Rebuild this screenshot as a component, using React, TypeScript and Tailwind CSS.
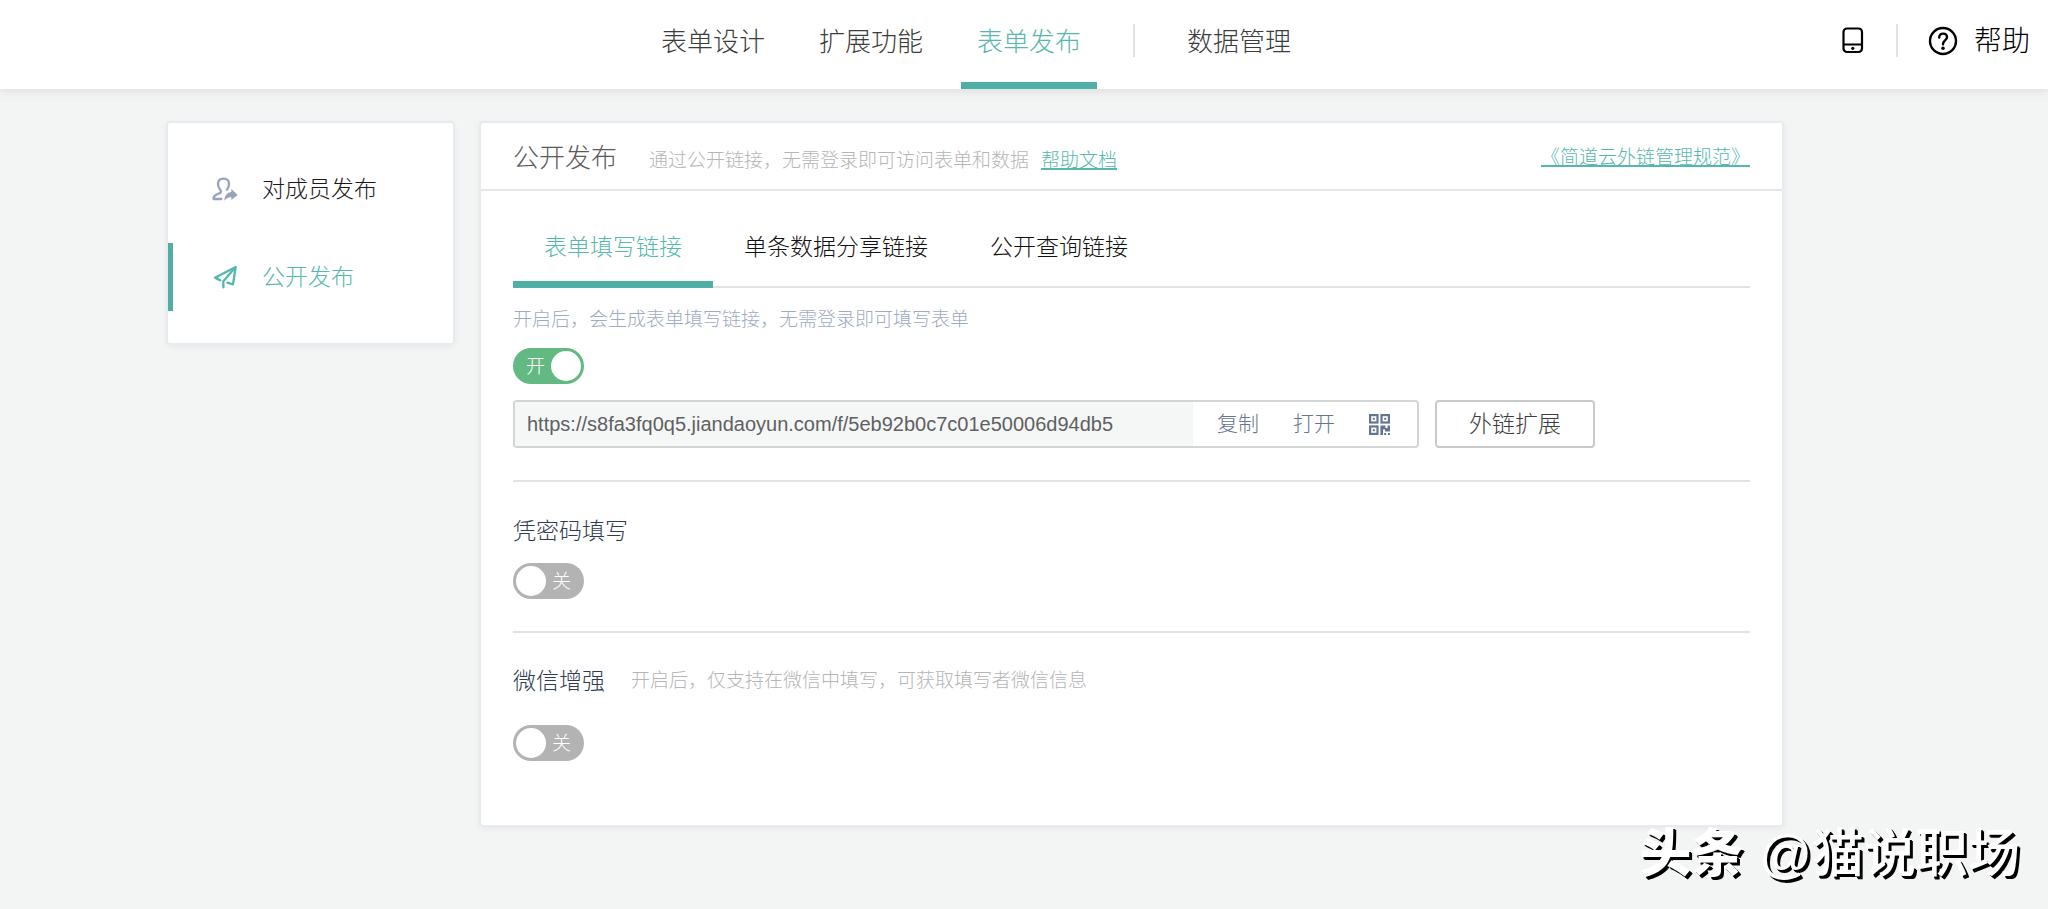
import { useId, useState } from "react";
import type { ReactNode } from "react";

function MemberShareIcon() {
  return (
    <svg viewBox="0 0 76 72" className="h-6 w-[26px]" aria-hidden="true">
      <path
        d="M27 66H4C2 58 8 54 16 51C26 48 28 45 24 39C19 33 17 27 17 21C17 11 23 5 33 5C44 5 50 11 50 21C50 28 47 34 44 38"
        fill="none"
        stroke="currentColor"
        strokeWidth="7"
        strokeLinecap="round"
        strokeLinejoin="round"
      />
      <path d="M36 71C37 55 45 46 57 45V36L76 54L57 69V60C49 60 43 64 36 71Z" fill="currentColor" />
    </svg>
  );
}

function PlaneIcon() {
  return (
    <svg viewBox="0 0 76 72" className="h-6 w-[26px]" aria-hidden="true">
      <g fill="none" stroke="currentColor" strokeWidth="7" strokeLinecap="round" strokeLinejoin="round">
        <path d="M24 46L8 38L70 6L62 58L45 53" />
        <path d="M68 8L33 49V67" />
      </g>
    </svg>
  );
}

function PhoneIcon() {
  return (
    <svg viewBox="0 0 22 27" className="h-[27px] w-[22px]" aria-hidden="true">
      <rect x="1.5" y="1.5" width="18.5" height="23.5" rx="3.5" fill="none" stroke="currentColor" strokeWidth="2.2" />
      <path d="M1.5 17.5H20" stroke="currentColor" strokeWidth="2" />
      <circle cx="10.8" cy="21.3" r="1.6" fill="currentColor" />
    </svg>
  );
}

function HelpIcon() {
  return (
    <svg viewBox="0 0 30 30" className="h-[30px] w-[30px]" aria-hidden="true">
      <circle cx="15" cy="15" r="13" fill="none" stroke="currentColor" strokeWidth="2.4" />
      <path
        d="M11.2 11.5C11.2 9.2 12.8 7.600 15.100 7.600C17.400 7.600 19 9.100 19 11.200C19 14.300 15 14.600 15 18.200"
        fill="none"
        stroke="currentColor"
        strokeWidth="2.4"
        strokeLinecap="round"
      />
      <circle cx="15" cy="22.2" r="1.8" fill="currentColor" />
    </svg>
  );
}

function QrIcon() {
  return (
    <svg viewBox="0 0 21 21" className="h-[21px] w-[21px]" aria-hidden="true">
      <g fill="none" stroke="currentColor" strokeWidth="2.2">
        <rect x="1.1" y="1.1" width="7.4" height="7.4" />
        <rect x="12.5" y="1.1" width="7.4" height="7.4" />
        <rect x="1.1" y="12.5" width="7.4" height="7.4" />
      </g>
      <g fill="currentColor">
        <rect x="3.8" y="3.8" width="2" height="2" />
        <rect x="15.2" y="3.8" width="2" height="2" />
        <rect x="3.8" y="15.2" width="2" height="2" />
        <path d="M11.400 11.400H16.500V14H18.500V11.400H21V17.500H16V15.500H14V21H11.400Z" />
        <rect x="15.2" y="19" width="2" height="2" />
        <rect x="19" y="19" width="2" height="2" />
      </g>
    </svg>
  );
}

function Toggle({ label, initial = false }: { label: string; initial?: boolean }) {
  const [on, setOn] = useState(initial);
  const id = useId();
  return (
    <label
      htmlFor={id}
      className={`flex h-9 w-[71px] cursor-pointer items-center justify-between rounded-full text-[19px] leading-none text-white ${
        on ? "flex-row bg-[#63b982] pr-[3px] pl-[13px]" : "flex-row-reverse bg-[#b3b3b3] pr-[13px] pl-[3px]"
      }`}
    >
      <input
        id={id}
        type="checkbox"
        role="switch"
        aria-label={label}
        checked={on}
        onChange={() => setOn(!on)}
        className="sr-only"
      />
      <span>{on ? "开" : "关"}</span>
      <span className="size-[30px] rounded-full bg-white" />
    </label>
  );
}

function NavLink({ active = false, children }: { active?: boolean; children: ReactNode }) {
  return (
    <a
      href="#"
      aria-current={active ? "page" : undefined}
      className={`flex h-full items-center border-b-[7px] px-4 pt-0.5 ${
        active ? "border-[#50afa5] text-[#56b8ad]" : "border-transparent text-[#3c3c3c]"
      }`}
    >
      {children}
    </a>
  );
}

function Header() {
  return (
    <header className="relative flex h-[89px] items-stretch bg-white shadow-[0_2px_10px_rgba(0,0,0,0.1)]">
      <nav className="flex flex-1 items-stretch justify-center pl-[110px] text-[26px]">
        <div className="flex gap-[22px]">
          <NavLink>表单设计</NavLink>
          <NavLink>扩展功能</NavLink>
          <NavLink active>表单发布</NavLink>
        </div>
        <span className="mx-9 mt-6 h-[33px] w-0.5 bg-[#e2e2e2]" />
        <NavLink>数据管理</NavLink>
      </nav>
      <div className="flex items-center pr-[18px] pb-2 text-black">
        <button type="button" aria-label="手机预览">
          <PhoneIcon />
        </button>
        <span className="mr-[30px] ml-8 h-[33px] w-0.5 bg-[#e2e2e2]" />
        <a href="#" className="flex items-center gap-4 text-[28px] leading-10">
          <HelpIcon />
          <span className="pt-0.5">帮助</span>
        </a>
      </div>
    </header>
  );
}

function Sidebar() {
  return (
    <aside className="w-[289px] shrink-0 self-start rounded border-2 border-[#e9eaf1] bg-white py-8 text-[23px] shadow-[0_2px_6px_rgba(0,0,0,0.05)]">
      <nav className="flex flex-col gap-5">
        <a href="#" className="flex h-[68px] items-center gap-6 border-l-[5px] border-transparent pl-[39px] text-[#1a1a1a]">
          <span className="text-[#96a3ba]">
            <MemberShareIcon />
          </span>
          对成员发布
        </a>
        <a
          href="#"
          aria-current="page"
          className="flex h-[68px] items-center gap-6 border-l-[5px] border-[#50afa5] pl-[39px] text-[#56b8ad]"
        >
          <PlaneIcon />
          公开发布
        </a>
      </nav>
    </aside>
  );
}

const TABS = ["表单填写链接", "单条数据分享链接", "公开查询链接"];

function LinkTabs() {
  const [current, setCurrent] = useState(0);
  return (
    <div role="tablist" className="flex border-b-2 border-[#e3e3e3] text-[23px]">
      {TABS.map((tab, i) => (
        <button
          key={tab}
          type="button"
          role="tab"
          aria-selected={i === current}
          onClick={() => setCurrent(i)}
          className={`-mb-0.5 flex h-[82px] items-center border-b-[7px] px-[31px] pt-2 ${
            i === current ? "border-[#50afa5] text-[#56b8ad]" : "border-transparent text-[#111]"
          }`}
        >
          {tab}
        </button>
      ))}
    </div>
  );
}

function LinkRow() {
  return (
    <div className="mt-4 flex gap-4">
      <div className="flex h-12 w-[906px] rounded border-2 border-[#d3d5d5] bg-white text-[21px] text-[#66758f]">
        <input
          type="text"
          readOnly
          aria-label="表单填写链接"
          value="https://s8fa3fq0q5.jiandaoyun.com/f/5eb92b0c7c01e50006d94db5"
          className="min-w-0 flex-1 bg-[#f5f7f7] px-3 text-[20px] font-normal text-[#5f6061] outline-none"
        />
        <div className="flex items-center gap-[34px] pr-[27px] pl-6">
          <button type="button">复制</button>
          <button type="button">打开</button>
          <button type="button" aria-label="二维码">
            <QrIcon />
          </button>
        </div>
      </div>
      <button
        type="button"
        className="h-12 rounded border-2 border-[#c9c9c9] bg-white px-8 text-[23px] text-[#3c3c3c]"
      >
        外链扩展
      </button>
    </div>
  );
}

function PublishPanel() {
  return (
    <main className="min-w-0 flex-1 rounded border-2 border-[#e9eaf1] bg-white shadow-[0_2px_6px_rgba(0,0,0,0.05)]">
      <div className="flex h-[68px] items-center justify-between border-b-2 border-[#e5e5e8] px-8 pt-1">
        <div className="flex items-center">
          <h1 className="text-[26px] text-[#5a5a5a]">公开发布</h1>
          <p className="ml-8 flex gap-3 pt-1.5 text-[19px] text-[#b5b5b5]">
            通过公开链接，无需登录即可访问表单和数据
            <a href="#" className="text-[#56b8ad] underline decoration-2">
              帮助文档
            </a>
          </p>
        </div>
        <a href="#" className="text-[19px] text-[#56b8ad] underline decoration-2">
          《简道云外链管理规范》
        </a>
      </div>
      <div className="px-8 pt-[15px] pb-16">
        <LinkTabs />
        <p className="mt-[18px] mb-[14px] text-[19px] leading-7 text-[#9faac3]">
          开启后，会生成表单填写链接，无需登录即可填写表单
        </p>
        <Toggle label="公开填写链接" initial />
        <LinkRow />
        <section className="mt-8 border-t-2 border-[#e3e3e3] pt-[33px]">
          <h2 className="text-[23px] leading-8 text-[#2f3b50]">凭密码填写</h2>
          <div className="mt-4">
            <Toggle label="凭密码填写" />
          </div>
        </section>
        <section className="mt-8 border-t-2 border-[#e3e3e3] pt-8">
          <div className="flex items-center gap-[26px]">
            <h2 className="text-[23px] leading-8 text-[#2f3b50]">微信增强</h2>
            <p className="text-[19px] text-[#b5b5b5]">开启后，仅支持在微信中填写，可获取填写者微信信息</p>
          </div>
          <div className="mt-7">
            <Toggle label="微信增强" />
          </div>
        </section>
      </div>
    </main>
  );
}

export default function App() {
  return (
    <div className="relative min-h-screen bg-[#f3f5f4] font-['Liberation_Sans','Noto_Sans_CJK_SC',sans-serif] font-light">
      <Header />
      <div className="flex gap-6 pt-8 pr-[264px] pb-20 pl-[166px]">
        <Sidebar />
        <PublishPanel />
      </div>
      <div className="absolute right-7 bottom-[19px] flex items-center gap-4 text-[52px] leading-[72px] text-white [text-shadow:2px_2px_0_#000,3px_3px_0_#000]">
        <span className="font-black">头条</span>
        <span className="font-medium">@猫说职场</span>
      </div>
    </div>
  );
}
